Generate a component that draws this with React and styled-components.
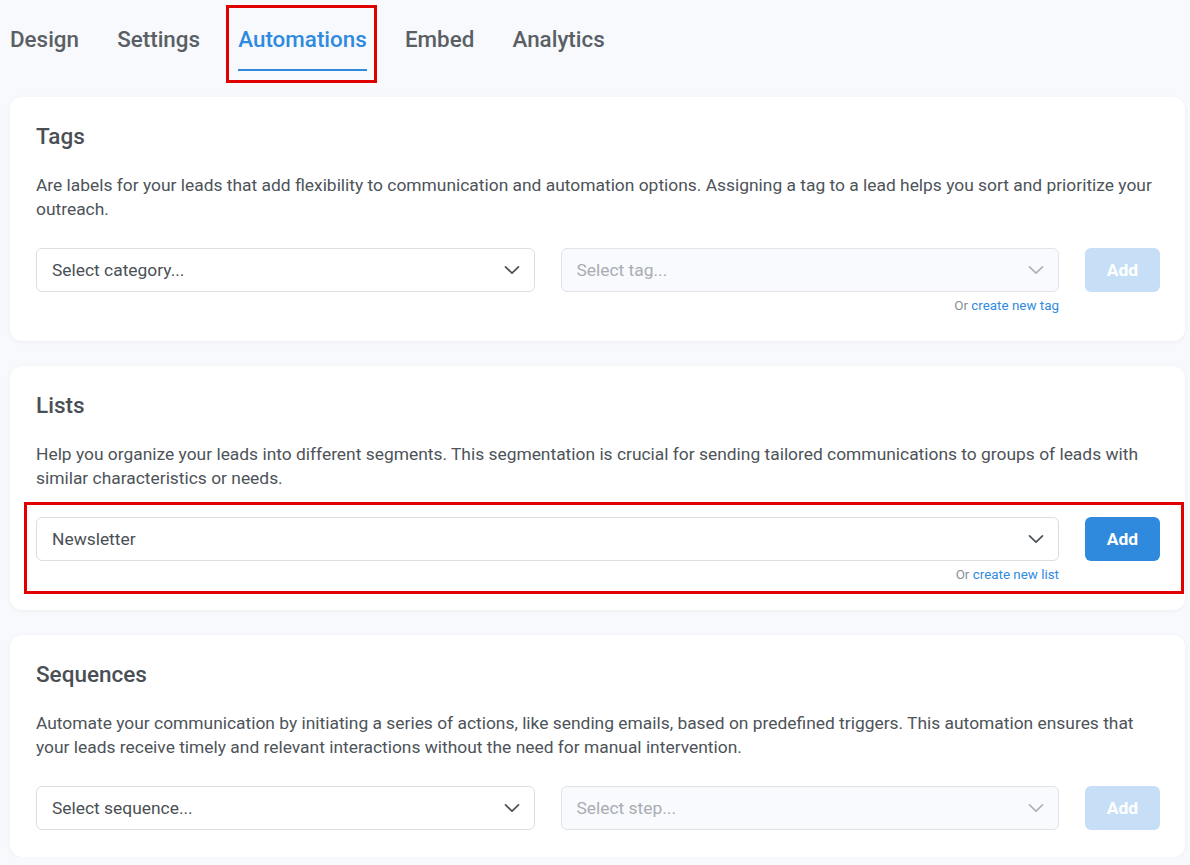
import React from 'react'
import styled, { createGlobalStyle } from 'styled-components'

const GlobalStyle = createGlobalStyle`
    html, body {
        margin: 0;
        padding: 0;
        background: #f8f9fc;
        font-family: Roboto, "Liberation Sans", Arial, sans-serif;
    }
`

const tabs = ['Design', 'Settings', 'Automations', 'Embed', 'Analytics']

const Chevron = ({ disabled }) => (
    <svg width="16" height="10" viewBox="0 0 16 10" fill="none">
        <path
            d="M1.5 1.8 L8 8.2 L14.5 1.8"
            stroke={disabled ? '#aeb3b9' : '#4b5158'}
            strokeWidth="1.7"
            strokeLinecap="round"
            strokeLinejoin="round"
        />
    </svg>
)

const Select = ({ value, disabled }) => (
    <SelectBox disabled={disabled}>
        <span>{value}</span>
        <Chevron disabled={disabled} />
    </SelectBox>
)

const App = () => {
    return (
        <Page>
            <GlobalStyle />
            <TabBar>
                {tabs.map(t => (
                    <Tab key={t} $active={t === 'Automations'} $marked={t === 'Automations'}>
                        {t}
                    </Tab>
                ))}
            </TabBar>

            <Card>
                <Title>Tags</Title>
                <Description>
                    Are labels for your leads that add flexibility to communication and automation options. Assigning a tag to a lead helps you sort and prioritize your outreach.
                </Description>
                <Row>
                    <Field>
                        <Select value="Select category..." />
                    </Field>
                    <Field>
                        <Select value="Select tag..." disabled />
                        <Hint>Or <a>create new tag</a></Hint>
                    </Field>
                    <AddButton disabled>Add</AddButton>
                </Row>
            </Card>

            <Card>
                <Title>Lists</Title>
                <Description>
                    Help you organize your leads into different segments. This segmentation is crucial for sending tailored communications to groups of leads with similar characteristics or needs.
                </Description>
                <Row $marked>
                    <Field>
                        <Select value="Newsletter" />
                        <Hint>Or <a>create new list</a></Hint>
                    </Field>
                    <AddButton>Add</AddButton>
                </Row>
            </Card>

            <Card>
                <Title>Sequences</Title>
                <Description>
                    Automate your communication by initiating a series of actions, like sending emails, based on predefined triggers. This automation ensures that your leads receive timely and relevant interactions without the need for manual intervention.
                </Description>
                <Row>
                    <Field>
                        <Select value="Select sequence..." />
                    </Field>
                    <Field>
                        <Select value="Select step..." disabled />
                    </Field>
                    <AddButton disabled>Add</AddButton>
                </Row>
            </Card>
        </Page>
    )
}

const Page = styled.div`
    padding: 0 5px 0 10px;
    display: flex;
    flex-direction: column;
    gap: 25px;
`

const TabBar = styled.div`
    display: flex;
    gap: 38.2px;
    height: 72px;
`

const Tab = styled.div`
    position: relative;
    padding-top: 26px;
    height: 43px;
    box-sizing: content-box;
    font-size: 22.4px;
    font-weight: 500;
    line-height: 26px;
    color: ${p => (p.$active ? '#2f8ae0' : '#5a5f66')};
    border-bottom: 2px solid ${p => (p.$active ? '#2f8ae0' : 'transparent')};

    &::after {
        content: '';
        display: ${p => (p.$marked ? 'block' : 'none')};
        position: absolute;
        left: -12px;
        right: -10px;
        top: 5px;
        bottom: -14px;
        border: 3px solid #e00000;
    }
`

const Card = styled.div`
    background: #ffffff;
    border-radius: 12px;
    padding: 26px 25px 27px 26px;
    box-shadow: 0 1px 4px rgba(30, 40, 70, 0.05);
`

const Title = styled.h2`
    margin: 0;
    font-size: 22.5px;
    font-weight: 500;
    line-height: 26px;
    color: #4a4f55;
`

const Description = styled.p`
    margin: 24px 0 27px;
    font-size: 17.4px;
    line-height: 24px;
    color: #4d5359;
`

const Row = styled.div`
    position: relative;
    display: flex;
    gap: 26px;
    align-items: flex-start;

    &::after {
        content: '';
        display: ${p => (p.$marked ? 'block' : 'none')};
        position: absolute;
        left: -12px;
        right: -24px;
        top: -15px;
        bottom: -11px;
        border: 3px solid #e00000;
    }
`

const Field = styled.div`
    flex: 1;
    display: flex;
    flex-direction: column;
    align-items: flex-end;
`

const SelectBox = styled.div`
    width: 100%;
    box-sizing: border-box;
    height: 44px;
    display: flex;
    align-items: center;
    justify-content: space-between;
    padding: 0 14px 0 15px;
    border: 1px solid ${p => (p.disabled ? '#e1e3e8' : '#dcdee2')};
    border-radius: 6px;
    background: ${p => (p.disabled ? '#f8fafd' : '#ffffff')};
    font-size: 17.4px;
    color: ${p => (p.disabled ? '#a9adb3' : '#4a4f55')};
`

const Hint = styled.div`
    margin-top: 6px;
    font-size: 13.4px;
    line-height: 16px;
    color: #8a9098;

    a {
        color: #2f8ae0;
        cursor: pointer;
    }
`

const AddButton = styled.button`
    width: 75px;
    height: 44px;
    border: none;
    border-radius: 6px;
    background: ${p => (p.disabled ? '#c6dff6' : '#2f89dd')};
    color: #ffffff;
    font-family: inherit;
    font-size: 17.4px;
    font-weight: 700;
    flex-shrink: 0;
`

export default App
